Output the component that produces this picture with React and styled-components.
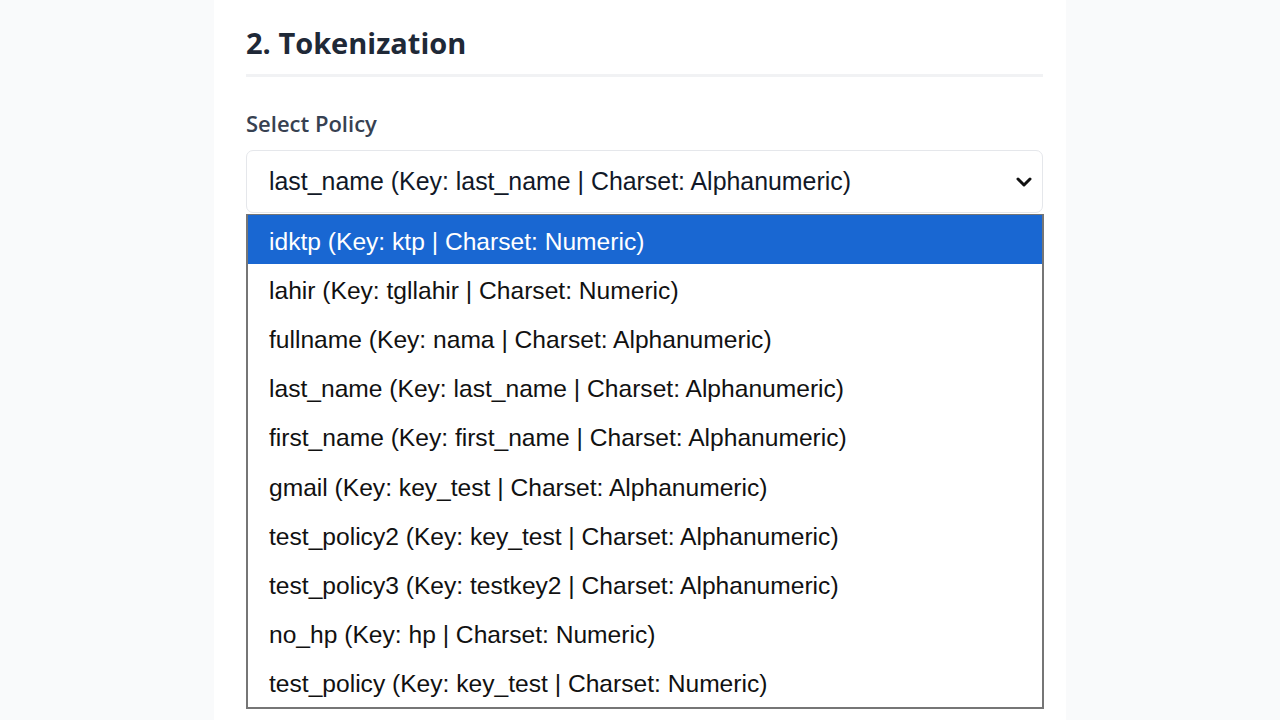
import React from 'react';
import styled, { createGlobalStyle } from 'styled-components';

const GlobalStyle = createGlobalStyle`
  html, body {
    margin: 0;
    padding: 0;
    background: #f9fafb;
    height: 720px;
    overflow: hidden;
  }
`;

const Card = styled.div`
  width: 797px;
  margin: -10px 0 0 214px;
  padding: 32px 23px 40px 32px;
  background: #ffffff;
  min-height: 700px;
  box-sizing: content-box;
`;

const Title = styled.h2`
  margin: 0;
  padding: 0 0 10px;
  font-family: 'Open Sans', 'Noto Sans', sans-serif;
  font-weight: 700;
  font-size: 29px;
  line-height: 42px;
  color: #1f2937;
  border-bottom: 3px solid #f1f2f4;
`;

const Label = styled.label`
  display: block;
  margin: 30px 0 11px;
  font-family: 'Open Sans', 'Noto Sans', sans-serif;
  font-weight: 600;
  font-size: 22px;
  line-height: 32px;
  color: #374151;
`;

const Field = styled.div`
  position: relative;
`;

const SelectBox = styled.div`
  display: flex;
  align-items: center;
  justify-content: space-between;
  height: 63px;
  padding: 0 8px 0 22px;
  border: 1px solid #e5e7eb;
  border-radius: 7px;
  box-sizing: border-box;
  font-family: 'Liberation Sans', Arial, sans-serif;
  font-size: 24.9px;
  color: #111827;
`;

const Chevron = styled.svg`
  width: 20px;
  height: 20px;
`;

const Menu = styled.ul`
  position: absolute;
  top: 64px;
  left: 0;
  right: -1px;
  margin: 0;
  padding: 0;
  list-style: none;
  background: #ffffff;
  border: 2px solid #767676;
  border-top: 1px solid #767676;
`;

const Option = styled.li`
  height: 49.2px;
  box-sizing: border-box;
  display: flex;
  align-items: center;
  padding: 4px 0 0 21px;
  font-family: 'Liberation Sans', Arial, sans-serif;
  font-size: 24.6px;
  color: ${(p) => (p.$active ? '#ffffff' : '#111111')};
  background: ${(p) => (p.$active ? '#1967d2' : 'transparent')};
`;

const policies = [
  'idktp (Key: ktp | Charset: Numeric)',
  'lahir (Key: tgllahir | Charset: Numeric)',
  'fullname (Key: nama | Charset: Alphanumeric)',
  'last_name (Key: last_name | Charset: Alphanumeric)',
  'first_name (Key: first_name | Charset: Alphanumeric)',
  'gmail (Key: key_test | Charset: Alphanumeric)',
  'test_policy2 (Key: key_test | Charset: Alphanumeric)',
  'test_policy3 (Key: testkey2 | Charset: Alphanumeric)',
  'no_hp (Key: hp | Charset: Numeric)',
  'test_policy (Key: key_test | Charset: Numeric)',
];

export default function App() {
  return (
    <>
      <GlobalStyle />
      <Card>
        <Title>2. Tokenization</Title>
        <Label>Select Policy</Label>
        <Field>
          <SelectBox>
            <span>last_name (Key: last_name | Charset: Alphanumeric)</span>
            <Chevron viewBox="0 0 20 20" fill="none">
              <path d="M4 7l6 6 6-6" stroke="#111" strokeWidth="3" strokeLinecap="round" strokeLinejoin="round" />
            </Chevron>
          </SelectBox>
          <Menu>
            {policies.map((p, i) => (
              <Option key={p} $active={i === 0}>{p}</Option>
            ))}
          </Menu>
        </Field>
      </Card>
    </>
  );
}
